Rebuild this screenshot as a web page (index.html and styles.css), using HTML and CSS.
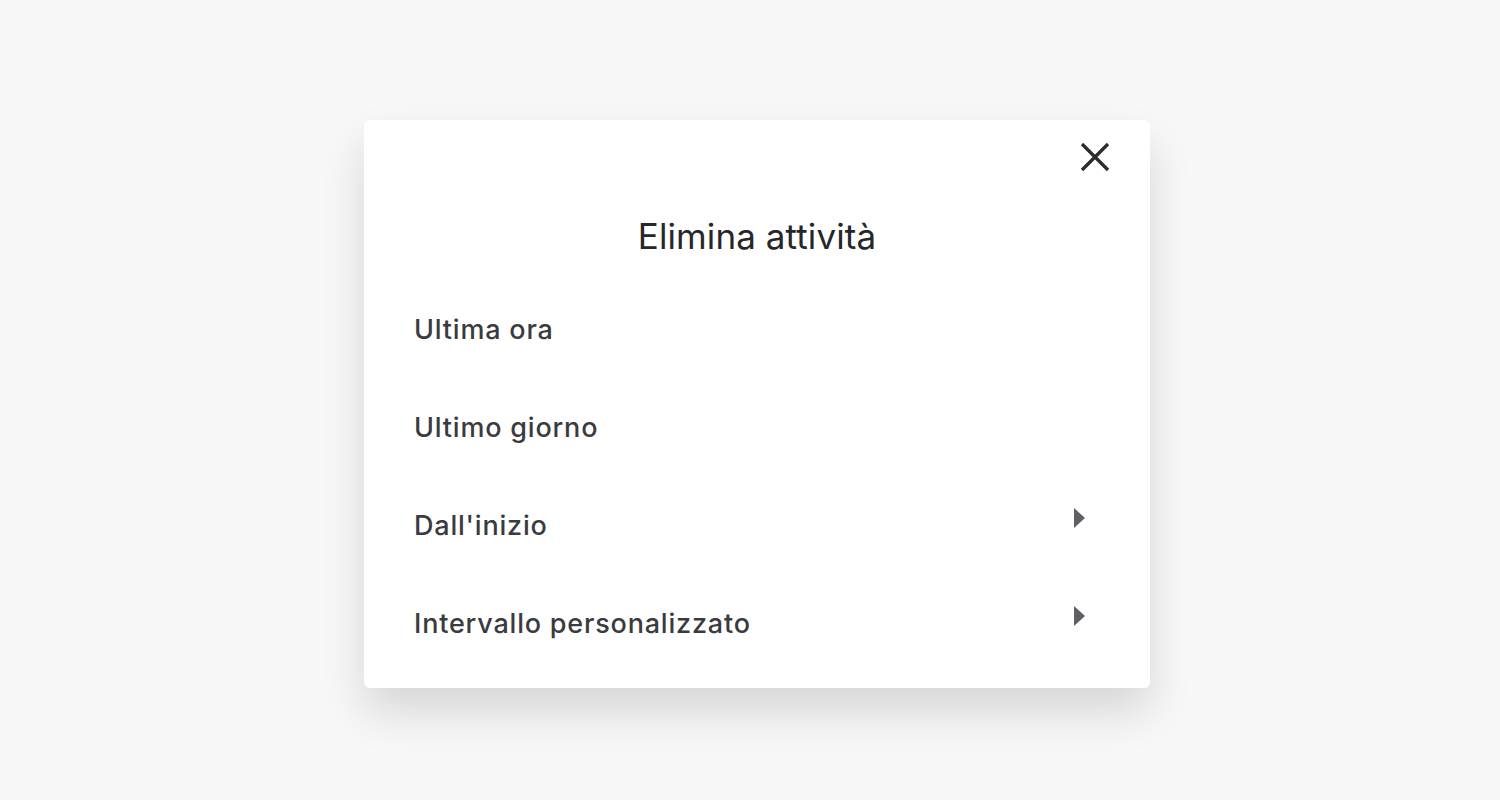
FILE: index.html
```html
<!DOCTYPE html>
<html>
  <head>
    <title>Elimina attività</title>
    <link rel="stylesheet" href="styles.css">
  </head>
  <body>
    <div class="dialog">
      <div class="dialogTop">
        <button class="closeButton" aria-label="Chiudi">
          <svg width="30" height="30" viewBox="0 0 30 30">
            <path d="M2 2 L28 28 M28 2 L2 28" stroke="#2b2c2e" stroke-width="3.3" fill="none"/>
          </svg>
        </button>
      </div>

      <h1 class="dialogTitle">Elimina attività</h1>

      <div class="optionList">
        <div class="optionRow">
          <span>Ultima ora</span>
        </div>
        <div class="optionRow">
          <span>Ultimo giorno</span>
        </div>
        <div class="optionRow">
          <span>Dall'inizio</span>
          <span class="arrow"></span>
        </div>
        <div class="optionRow">
          <span>Intervallo personalizzato</span>
          <span class="arrow"></span>
        </div>
      </div>
    </div>
  </body>
</html>
```

FILE: styles.css
```css
body {
  margin: 0;
  padding-top: 120px;
  min-height: 800px;
  box-sizing: border-box;
  background-color: #f7f7f7;
  font-family: Inter, "Open Sans", sans-serif;
}

.dialog {
  width: 786px;
  height: 568px;
  margin-left: 364px;
  box-sizing: border-box;
  background-color: white;
  border-radius: 6px;
  box-shadow: 0 24px 44px rgba(0, 0, 0, 0.13);
  padding: 22px 40px 0 50px;
}

.dialogTop {
  display: flex;
  justify-content: flex-end;
  height: 30px;
}

.closeButton {
  background: none;
  border: none;
  padding: 0;
  width: 30px;
  height: 30px;
  cursor: pointer;
}

.dialogTitle {
  margin: 44px 0 0 0;
  text-align: center;
  font-size: 35px;
  font-weight: 400;
  color: #26272a;
  line-height: 40px;
  padding-right: 10px;
  letter-spacing: 0.1px;
}

.optionList {
  margin-top: 24px;
  padding-right: 25px;
}

.optionRow {
  display: flex;
  justify-content: space-between;
  align-items: center;
  height: 98px;
  font-size: 27px;
  font-weight: 500;
  letter-spacing: 0.8px;
  color: #3a3b3e;
}

.arrow {
  width: 0;
  height: 0;
  border-top: 10px solid transparent;
  border-bottom: 10px solid transparent;
  border-left: 11px solid #5f6065;
  margin-top: -14px;
}
```
